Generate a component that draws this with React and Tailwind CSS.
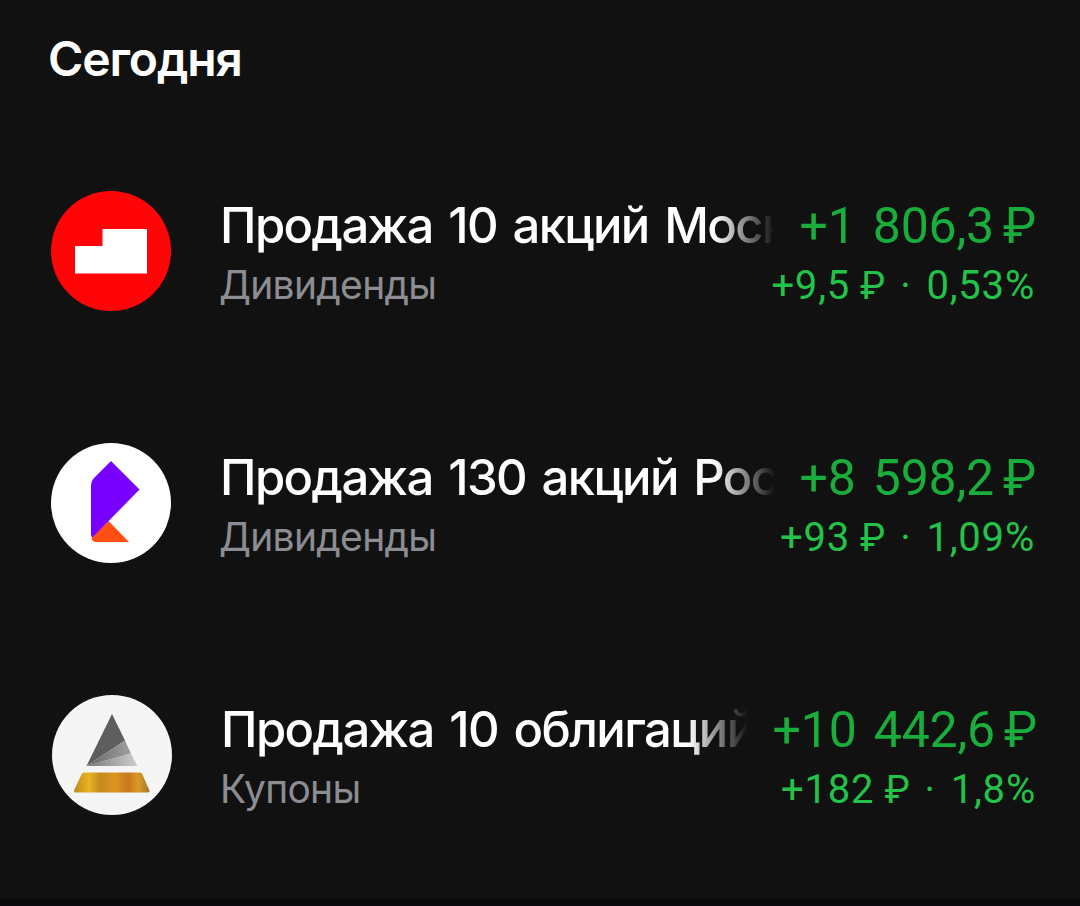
function MoscowExchangeLogo() {
  return (
    <svg viewBox="0 0 120 120" className="size-[120px] shrink-0">
      <circle cx="60" cy="60" r="60" fill="#ff0508" />
      <path d="M24 55h27.500v-17h44.500v44.500h-72z" fill="#fff" />
    </svg>
  );
}

function RostelecomLogo() {
  return (
    <svg viewBox="0 0 120 120" className="size-[120px] shrink-0">
      <circle cx="60" cy="60" r="60" fill="#fff" />
      <path d="M57.500 78L78 99H44.500a4.500 4.500 0 0 1-4-4z" fill="#ff4f12" />
      <path d="M60 18l28.500 28.500L41.500 94.500q-1.500-1-1.500-3V42q0-4 3-7z" fill="#7700ff" />
    </svg>
  );
}

function GoldBarLogo() {
  return (
    <svg viewBox="0 0 120 120" className="size-[120px] shrink-0">
      <defs>
        <linearGradient id="gold" x1="0" x2="1">
          <stop offset="0" stopColor="#c08a1c" />
          <stop offset="0.200" stopColor="#e8b420" />
          <stop offset="0.340" stopColor="#c58a20" />
          <stop offset="0.550" stopColor="#dd951f" />
          <stop offset="0.720" stopColor="#c9781e" />
          <stop offset="0.850" stopColor="#d99a26" />
          <stop offset="1" stopColor="#a87526" />
        </linearGradient>
        <linearGradient id="steel" x1="0" x2="1">
          <stop offset="0" stopColor="#666" />
          <stop offset="1" stopColor="#a0a0a0" />
        </linearGradient>
        <linearGradient id="silver" x1="0" x2="1">
          <stop offset="0" stopColor="#777" />
          <stop offset="1" stopColor="#cfcfcf" />
        </linearGradient>
      </defs>
      <circle cx="60" cy="60" r="60" fill="#f5f5f5" />
      <path d="M60 19l13 26.500L34.500 71z" fill="#5e5e5e" />
      <path d="M73 45.500l6 13L34.500 71z" fill="url(#steel)" />
      <path d="M79 58.500l6.500 12.500h-51z" fill="url(#silver)" />
      <path d="M32 77.500h56q1.500 0 2.200 1.500l7 16q1 2.500-1.500 2.500h-72q-2.500 0-1.500-2.500l7.600-16q.700-1.500 2.200-1.500z" fill="url(#gold)" />
    </svg>
  );
}

const operations = [
  {
    id: 1,
    logo: MoscowExchangeLogo,
    title: 'Продажа 10 акций Моск',
    type: 'Дивиденды',
    amount: '+1 806,3',
    profit: '+9,5',
    percent: '0,53%',
    offset: '',
  },
  {
    id: 2,
    logo: RostelecomLogo,
    title: 'Продажа 130 акций Рос',
    type: 'Дивиденды',
    amount: '+8 598,2',
    profit: '+93',
    percent: '1,09%',
    offset: '',
  },
  {
    id: 3,
    logo: GoldBarLogo,
    title: 'Продажа 10 облигаций',
    type: 'Купоны',
    amount: '+10 442,6',
    profit: '+182',
    percent: '1,8%',
    offset: 'translate-x-px',
  },
];

function OperationRow({ operation }) {
  const Logo = operation.logo;

  return (
    <li className={`flex h-[120px] gap-[49px] ${operation.offset}`}>
      <Logo />
      <div className="min-w-0 flex-1 pt-[5px]">
        <div className="flex h-[59px] gap-[25px] whitespace-nowrap leading-[60px]">
          <p className="min-w-0 flex-1 overflow-hidden text-[49px] font-medium tracking-[-1.6px] text-white [word-spacing:4px] [mask-image:linear-gradient(to_left,transparent,black_60px)]">
            {operation.title}
          </p>
          <p className="font-['Roboto',sans-serif] text-[50px] tracking-[-0.2px] text-[#19ad3b] [word-spacing:5px]">
            {operation.amount}
            <span className="ml-[9px]">₽</span>
          </p>
        </div>
        <div className="flex h-[60px] justify-between whitespace-nowrap leading-[60px]">
          <p className="-ml-px text-[39px] tracking-[-0.7px] text-[#8b8d93]">{operation.type}</p>
          <p className="pr-[1px] pt-px font-['Roboto',sans-serif] text-[40px] tracking-[0.8px] text-[#22c348]">
            {operation.profit}
            <span className="ml-[10px] text-[38px]">₽</span>
            <span className="ml-[14px] mr-[15px]">·</span>
            {operation.percent}
          </p>
        </div>
      </div>
    </li>
  );
}

export default function App() {
  return (
    <div className="flex h-[906px] w-[1080px] flex-col overflow-hidden bg-[#111111] font-['Inter',sans-serif]">
      <main className="flex-1 pl-[51px] pr-[44px] pt-[29px]">
        <h1 className="-ml-[3px] h-[60px] text-[48px] font-semibold leading-[60px] tracking-[-1.1px] text-white">
          Сегодня
        </h1>
        <ul className="mt-[102px] flex flex-col gap-[132px]">
          {operations.map((operation) => (
            <OperationRow key={operation.id} operation={operation} />
          ))}
        </ul>
      </main>
      <div className="h-[7px] bg-[#0a090b]" />
    </div>
  );
}
